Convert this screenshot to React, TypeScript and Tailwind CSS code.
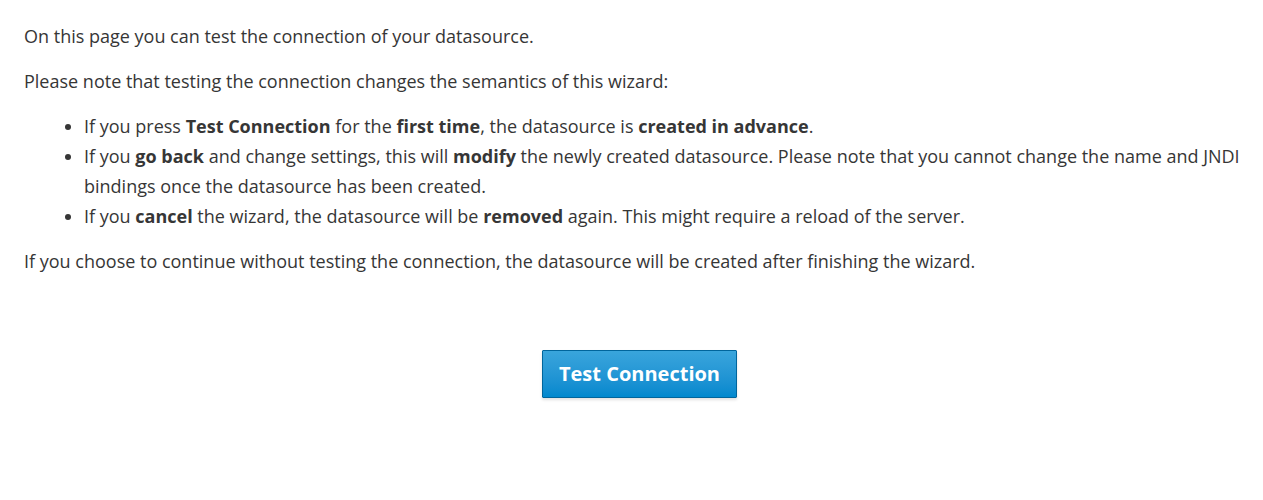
export default function App() {
    return (
        <div className="min-h-screen bg-white pl-6 pr-2 pt-[21px] text-[18px] leading-[30px] text-[#363636] [font-family:'Open_Sans',sans-serif]">
            <p className="mb-[15px]">On this page you can test the connection of your datasource.</p>
            <p className="mb-[15px]">Please note that testing the connection changes the semantics of this wizard:</p>
            <ul className="mb-[15px] list-disc pl-[60px]">
                <li>
                    If you press <b>Test Connection</b> for the <b>first time</b>, the datasource is <b>created in advance</b>.
                </li>
                <li>
                    If you <b>go back</b> and change settings, this will <b>modify</b> the newly created datasource. Please note that you cannot change the name and JNDI bindings once the datasource has been created.
                </li>
                <li>
                    If you <b>cancel</b> the wizard, the datasource will be <b>removed</b> again. This might require a reload of the server.
                </li>
            </ul>
            <p>If you choose to continue without testing the connection, the datasource will be created after finishing the wizard.</p>

            <div className="mt-[74px] flex justify-center">
                <button className="h-[48px] w-[195px] rounded-[1px] border border-[#00659c] bg-gradient-to-b from-[#39a5dc] to-[#0088ce] text-[20px] font-bold text-white shadow-[0_2px_3px_rgba(0,0,0,0.12)]">
                    Test Connection
                </button>
            </div>
        </div>
    )
}
